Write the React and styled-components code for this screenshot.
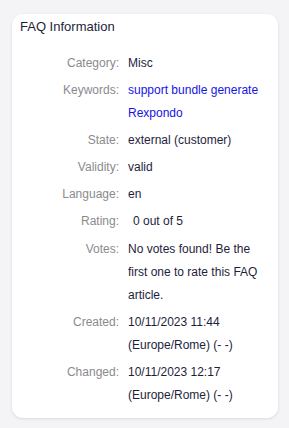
import React from "react";
import styled, { createGlobalStyle } from "styled-components";

const Global = createGlobalStyle`
  html, body { margin: 0; padding: 0; background: #f4f4f7; }
  body { font-family: "Liberation Sans", Arial, sans-serif; }
`;

const Page = styled.div`
  padding: 14px 11px 11px 12px;
`;

const Card = styled.section`
  background: #ffffff;
  border-radius: 11px;
  box-shadow: 0 1px 3px rgba(30, 30, 60, 0.12);
  padding: 3px 8px 11px 8px;
  width: 266px;
  box-sizing: border-box;
`;

const Title = styled.h2`
  margin: 0 0 15px 0;
  font-size: 13px;
  font-weight: 400;
  line-height: 20px;
  color: #1e1e3c;
`;

const List = styled.dl`
  margin: 0;
  display: grid;
  grid-template-columns: 99px 1fr;
  column-gap: 9px;
  row-gap: 4.1px;
  font-size: 12px;
  line-height: 23px;
`;

const Label = styled.dt`
  text-align: right;
  color: #8a8a8e;
  margin: 0;
`;

const Value = styled.dd`
  margin: 0;
  padding-left: ${(p) => (p.$indent ? "5px" : "0")};
  color: ${(p) => (p.$link ? "#1414e6" : "#1e1e3c")};
  padding-right: 4px;
`;

const rows = [
  ["Category:", "Misc"],
  ["Keywords:", "support bundle generate Rexpondo", { link: true }],
  ["State:", "external (customer)"],
  ["Validity:", "valid"],
  ["Language:", "en"],
  ["Rating:", "0 out of 5", { indent: true }],
  ["Votes:", "No votes found! Be the first one to rate this FAQ article."],
  ["Created:", "10/11/2023 11:44 (Europe/Rome) (- -)"],
  ["Changed:", "10/11/2023 12:17 (Europe/Rome) (- -)"],
];

export default function App() {
  return (
    <Page>
      <Global />
      <Card>
        <Title>FAQ Information</Title>
        <List>
          {rows.map(([label, value, opts = {}]) => (
            <React.Fragment key={label}>
              <Label>{label}</Label>
              <Value $link={opts.link} $indent={opts.indent}>
                {value}
              </Value>
            </React.Fragment>
          ))}
        </List>
      </Card>
    </Page>
  );
}
